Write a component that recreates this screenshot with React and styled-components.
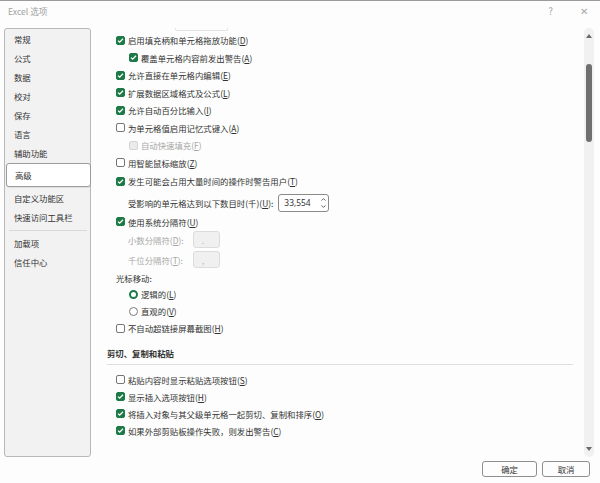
import React from 'react'
import styled, { createGlobalStyle } from 'styled-components'

const GlobalStyle = createGlobalStyle`
  html, body {
    margin: 0;
    padding: 0;
    background: #fcfdfc;
  }
  body {
    font-family: "Noto Sans CJK SC", "Noto Sans", sans-serif;
    color: #333333;
  }
`

const Window = styled.div`
  width: 600px;
  height: 483px;
  box-sizing: border-box;
  border-top: 1px solid #9a9a9a;
  background: #fcfdfc;
  display: flex;
  flex-direction: column;
  overflow: hidden;
`

const TitleBar = styled.div`
  height: 27px;
  display: flex;
  align-items: flex-start;
  padding: 4px 0 0 8px;
  box-sizing: border-box;
  font-size: 8.6px;
  color: #a2a2a2;
`

const TitleText = styled.div`
  flex: 1;
  line-height: 12px;
`

const TitleButton = styled.div`
  width: 33px;
  text-align: center;
  font-size: 10px;
  line-height: 12px;
  color: #a8a8a8;
`

const Body = styled.div`
  flex: 1;
  display: flex;
  min-height: 0;
`

const Nav = styled.div`
  width: 87px;
  margin-left: 4px;
  box-sizing: border-box;
  border: 1px solid #b8b8b8;
  border-radius: 3px;
  background: #f2f2f2;
  display: flex;
  flex-direction: column;
  font-size: 8.4px;
`

const NavItem = styled.div`
  height: ${p => (p.$active ? 24 : 19)}px;
  margin: ${p => (p.$active ? '1px -1px 0 1px' : '0')};
  margin-top: ${p => p.$mt || (p.$active ? 1 : 0)}px;
  padding-left: ${p => (p.$active ? 8 : 9)}px;
  display: flex;
  align-items: center;
  box-sizing: border-box;
  background: ${p => (p.$active ? '#ffffff' : 'transparent')};
  border: ${p => (p.$active ? '1px solid #9c9c9c' : 'none')};
  border-radius: 3px;
  box-shadow: ${p => (p.$active ? '0 1px 1px rgba(0,0,0,0.08)' : 'none')};
`

const NavSep = styled.div`
  height: 1px;
  margin: 3px 3px 0 4px;
  background: #d9d9d9;
`

const Content = styled.div`
  flex: 1;
  padding: 0 11px 0 16px;
  display: flex;
  flex-direction: column;
  font-size: 8.4px;
`

const CutOff = styled.div`
  width: 51px;
  height: 2px;
  margin-left: 68px;
  border: 1px solid #e2e2e2;
  border-top: none;
  border-radius: 0 0 2px 2px;
`

const Row = styled.div`
  height: ${p => p.$h || 17.5}px;
  margin-top: ${p => p.$mt || 0}px;
  padding-left: ${p => p.$indent || 0}px;
  display: flex;
  align-items: center;
  white-space: nowrap;
  color: ${p => (p.$disabled ? '#a8a8a8' : '#333333')};
  font-weight: ${p => (p.$bold ? 700 : 400)};
`

const Box = styled.span`
  width: 9px;
  height: 9px;
  box-sizing: border-box;
  border-radius: 2px;
  margin-right: 3px;
  flex-shrink: 0;
  display: flex;
  align-items: center;
  justify-content: center;
  background: ${p => (p.$checked ? '#1d7a47' : p.$disabled ? '#ebebeb' : '#ffffff')};
  border: 1px solid ${p => (p.$checked ? '#1d7a47' : p.$disabled ? '#d4d4d4' : '#757575')};
`

const Circle = styled.span`
  width: 9px;
  height: 9px;
  box-sizing: border-box;
  border-radius: 50%;
  margin-right: 3px;
  flex-shrink: 0;
  background: #ffffff;
  border: ${p => (p.$checked ? '2.5px solid #1d7a47' : '1px solid #7a7a7a')};
`

const Key = styled.span`
  text-decoration: underline;
  text-underline-offset: 1px;
`

const SpinBox = styled.div`
  width: 51px;
  height: 18px;
  margin-left: 5px;
  box-sizing: border-box;
  border: 1px solid #8a8a8a;
  border-radius: 3px;
  background: #fff;
  display: flex;
  align-items: center;
  padding-left: 5px;
  font-family: "Noto Sans", sans-serif;
`

const SpinValue = styled.span`
  flex: 1;
`

const SpinArrows = styled.span`
  width: 10px;
  display: flex;
  flex-direction: column;
  align-items: center;
  gap: 4px;
`

const SmallInput = styled.div`
  width: 27px;
  height: 17px;
  margin-left: ${p => p.$ml}px;
  box-sizing: border-box;
  border: 1px solid #dcdcdc;
  border-radius: 3px;
  background: #f0f0f0;
  color: #b0b0b0;
  padding-left: 8px;
  display: flex;
  align-items: center;
`

const Divider = styled.div`
  height: 1px;
  margin-top: 2px;
  background: #dedede;
`

const Scroll = styled.div`
  width: 10px;
  margin-right: 6px;
  border-radius: 5px;
  background: #f1f1f1;
  display: flex;
  flex-direction: column;
  align-items: center;
`

const Arrow = styled.div`
  height: 16px;
  display: flex;
  align-items: center;
  justify-content: center;
`

const Thumb = styled.div`
  width: 6px;
  height: 78px;
  margin-top: 20px;
  border-radius: 3px;
  background: #6f6f6f;
`

const ScrollFill = styled.div`
  flex: 1;
`

const Footer = styled.div`
  height: 26px;
  display: flex;
  justify-content: flex-end;
  align-items: flex-start;
  padding: 4px 10px 0 0;
  box-sizing: border-box;
  gap: 5px;
`

const Button = styled.div`
  width: ${p => p.$w}px;
  height: 16px;
  box-sizing: border-box;
  border: 1px solid #8f8f8f;
  border-radius: 3px;
  background: #fdfdfd;
  font-size: 8.4px;
  display: flex;
  align-items: center;
  justify-content: center;
`

function Check({ checked, disabled }) {
  return (
    <Box $checked={checked} $disabled={disabled}>
      {checked && (
        <svg width="7" height="7" viewBox="0 0 7 7">
          <path d="M1 3.6 L2.7 5.2 L6 1.8" fill="none" stroke="#fff" strokeWidth="1.3" />
        </svg>
      )}
    </Box>
  )
}

function CheckRow({ checked, disabled, indent = 9, text, k, h, mt }) {
  return (
    <Row $indent={indent} $disabled={disabled} $h={h} $mt={mt}>
      <Check checked={checked} disabled={disabled} />
      {text}(<Key>{k}</Key>)
    </Row>
  )
}

function RadioRow({ checked, text, k, h, mt }) {
  return (
    <Row $indent={22} $h={h} $mt={mt}>
      <Circle $checked={checked} />
      {text}(<Key>{k}</Key>)
    </Row>
  )
}

function Tri({ up }) {
  return (
    <svg width="6" height="4" viewBox="0 0 6 4">
      <path d={up ? 'M0 4 L3 0 L6 4 Z' : 'M0 0 L6 0 L3 4 Z'} fill="#6a6a6a" />
    </svg>
  )
}

function Chevron({ up }) {
  return (
    <svg width="5" height="3" viewBox="0 0 5 3">
      <path d={up ? 'M0.5 2.6 L2.5 0.6 L4.5 2.6' : 'M0.5 0.4 L2.5 2.4 L4.5 0.4'} fill="none" stroke="#555" strokeWidth="0.9" />
    </svg>
  )
}

const navItems = ['常规', '公式', '数据', '校对', '保存', '语言', '辅助功能']

export default function App() {
  return (
    <Window>
      <GlobalStyle />
      <TitleBar>
        <TitleText>Excel 选项</TitleText>
        <TitleButton>?</TitleButton>
        <TitleButton>✕</TitleButton>
      </TitleBar>
      <Body>
        <Nav>
          {navItems.map(n => (
            <NavItem key={n}>{n}</NavItem>
          ))}
          <NavItem $active>高级</NavItem>
          <NavItem $mt={1.5}>自定义功能区</NavItem>
          <NavItem>快速访问工具栏</NavItem>
          <NavSep />
          <NavItem $mt={2.5}>加载项</NavItem>
          <NavItem>信任中心</NavItem>
        </Nav>
        <Content>
          <CutOff />
          <CheckRow checked text="启用填充柄和单元格拖放功能" k="D" mt={0.5} />
          <CheckRow checked indent={22} text="覆盖单元格内容前发出警告" k="A" />
          <CheckRow checked text="允许直接在单元格内编辑" k="E" />
          <CheckRow checked text="扩展数据区域格式及公式" k="L" />
          <CheckRow checked text="允许自动百分比输入" k="I" />
          <CheckRow text="为单元格值启用记忆式键入" k="A" />
          <CheckRow disabled indent={22} text="自动快速填充" k="F" />
          <CheckRow text="用智能鼠标缩放" k="Z" />
          <CheckRow checked text="发生可能会占用大量时间的操作时警告用户" k="T" mt={1} />
          <Row $indent={21} $h={21} $mt={2}>
            受影响的单元格达到以下数目时(千)(<Key>U</Key>):
            <SpinBox>
              <SpinValue>33,554</SpinValue>
              <SpinArrows>
                <Chevron up />
                <Chevron />
              </SpinArrows>
            </SpinBox>
          </Row>
          <CheckRow checked text="使用系统分隔符" k="U" h={17} />
          <Row $indent={21} $h={19} $disabled>
            小数分隔符(<Key>D</Key>):
            <SmallInput $ml={9}>.</SmallInput>
          </Row>
          <Row $indent={21} $h={19} $mt={1} $disabled>
            千位分隔符(<Key>T</Key>):
            <SmallInput $ml={10}>,</SmallInput>
          </Row>
          <Row $indent={9}>光标移动:</Row>
          <RadioRow checked text="逻辑的" k="L" h={17} mt={-1} />
          <RadioRow text="直观的" k="V" h={17} />
          <CheckRow text="不自动超链接屏幕截图" k="H" h={17} />
          <Row $bold $mt={8}>剪切、复制和粘贴</Row>
          <Divider />
          <CheckRow text="粘贴内容时显示粘贴选项按钮" k="S" h={17} mt={6} />
          <CheckRow checked text="显示插入选项按钮" k="H" h={17} />
          <CheckRow checked text="将插入对象与其父级单元格一起剪切、复制和排序" k="O" h={17} />
          <CheckRow checked text="如果外部剪贴板操作失败，则发出警告" k="C" h={17} />
        </Content>
        <Scroll>
          <Arrow>
            <Tri up />
          </Arrow>
          <Thumb />
          <ScrollFill />
          <Arrow>
            <Tri />
          </Arrow>
        </Scroll>
      </Body>
      <Footer>
        <Button $w={55}>确定</Button>
        <Button $w={48}>取消</Button>
      </Footer>
    </Window>
  )
}
